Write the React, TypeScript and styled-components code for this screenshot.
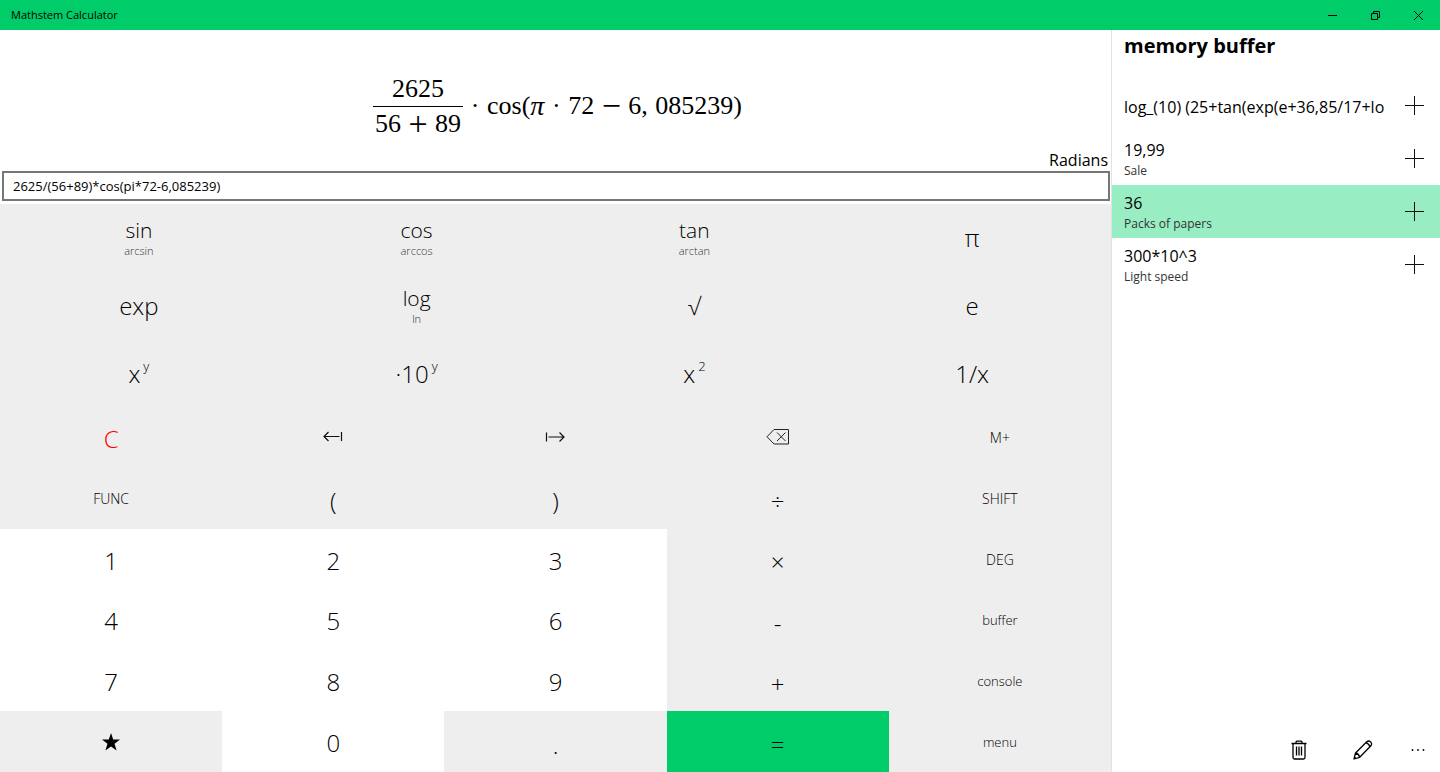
import React from "react";
import styled, { createGlobalStyle, css } from "styled-components";

const ACCENT = "#00cd69";
const KEY_GREY = "#eeeeee";
const UI_FONT = `"Open Sans", "Noto Sans", sans-serif`;
const MATH_FONT = `"Liberation Serif", serif`;

const GlobalStyle = createGlobalStyle`
  *, *::before, *::after { box-sizing: border-box; }
  body { margin: 0; background: #fff; color: #000; font-family: ${UI_FONT}; }
  button, input { font-family: inherit; color: inherit; }
  button { border: 0; padding: 0; margin: 0; background: none; cursor: pointer; }
`;

const Window = styled.div`
  display: flex;
  flex-direction: column;
  min-height: 100vh;
`;

const TitleBar = styled.header`
  display: flex;
  align-items: center;
  justify-content: space-between;
  height: 30px;
  padding-left: 11px;
  background: ${ACCENT};
`;

const AppTitle = styled.h1`
  margin: 0;
  font-size: 11px;
  line-height: 16px;
  font-weight: 400;
`;

const WindowControls = styled.div`
  display: flex;
  align-self: stretch;
`;

const WindowButton = styled.button`
  display: grid;
  place-items: center;
  width: 43px;
`;

const Content = styled.div`
  flex: 1;
  display: flex;
`;

const Calculator = styled.main`
  flex: 1;
  min-width: 0;
  display: flex;
  flex-direction: column;
`;

const FormulaArea = styled.section`
  display: flex;
  justify-content: center;
  align-items: center;
  height: 120px;
  padding: 32px 0 0 4px;
`;

const Formula = styled.div`
  display: flex;
  align-items: center;
  font-family: ${MATH_FONT};
  font-size: 26px;
  line-height: 34px;
  white-space: nowrap;
`;

const Fraction = styled.span`
  display: flex;
  flex-direction: column;
  align-items: center;
`;

const Numerator = styled.span`
  align-self: stretch;
  padding: 0 2px;
  border-bottom: 1px solid #000;
  text-align: center;
`;

const Denominator = styled.span`
  display: flex;
  padding: 0 2px;
`;

const Operator = styled.span<{ $wide?: boolean }>`
  display: inline-block;
  width: ${(p) => (p.$wide ? 34 : 24)}px;
  text-align: center;
  font-size: ${(p) => (p.$wide ? 34 : 26)}px;
`;

const Decimals = styled.span`
  margin-left: 1px;
`;

const Pi = styled.i`
  font-size: 28px;
`;

const AngleMode = styled.div`
  padding: 0 3px;
  font-size: 16px;
  line-height: 21px;
  text-align: right;
`;

const ExpressionInput = styled.input`
  height: 30px;
  margin: 0 1px 3px 2px;
  padding: 0 9px;
  border: 2px solid #767676;
  border-radius: 0;
  outline: none;
  background: #fff;
  font-size: 13px;
`;

const FunctionPad = styled.div`
  flex: 203 1 0;
  display: grid;
  grid-template-columns: repeat(4, 1fr);
  grid-auto-rows: 1fr;
  background: ${KEY_GREY};
`;

const NumberPad = styled.div`
  flex: 365 1 0;
  display: grid;
  grid-template-columns: repeat(5, 1fr);
  grid-auto-rows: 1fr;
`;

type Tone = "grey" | "white" | "accent";

const toneColor: Record<Tone, string> = {
  grey: KEY_GREY,
  white: "#ffffff",
  accent: ACCENT,
};

const keyBase = css`
  display: flex;
  align-items: center;
  justify-content: center;
  min-height: 48px;
  font-weight: 300;
`;

const FunctionKey = styled.button`
  ${keyBase}
  flex-direction: column;
  padding-top: 1px;
  font-size: 24px;
  line-height: 32px;
`;

const PairLabel = styled.span`
  font-size: 21px;
  line-height: 26px;
`;

const AltLabel = styled.small`
  font-size: 11px;
  line-height: 16px;
  color: #333;
`;

const PowerLabel = styled.span`
  display: flex;
  align-items: center;
`;

const Exponent = styled.sup`
  align-self: flex-start;
  margin-left: 3px;
  font-size: 13px;
  line-height: 16px;
`;

type Size = "word" | "caps" | "digit" | "sign";

const keySize = {
  word: css`
    font-size: 13px;
  `,
  caps: css`
    font-size: 14px;
  `,
  digit: css`
    padding-top: 2px;
    font-size: 24px;
  `,
  sign: css`
    padding-top: 5px;
    font-size: 24px;
  `,
};

const NumberKey = styled.button<{ $tone: Tone; $size: Size; $danger?: boolean }>`
  ${keyBase}
  background: ${(p) => toneColor[p.$tone]};
  color: ${(p) => (p.$danger ? "#ff0000" : "#000")};
  ${(p) => keySize[p.$size]}
`;

const Sidebar = styled.aside`
  display: flex;
  flex-direction: column;
  flex: 0 0 329px;
  min-width: 0;
  border-left: 1px solid #e2e2e2;
`;

const SidebarTitle = styled.h2`
  margin: 0 12px 17px;
  font-size: 20px;
  line-height: 32px;
  font-weight: 700;
`;

const MemoryList = styled.ul`
  flex: 1;
  margin: 0;
  padding: 0;
  list-style: none;
`;

const MemoryItem = styled.li<{ $selected?: boolean }>`
  display: flex;
  align-items: center;
  height: 53px;
  padding-left: 12px;
  background: ${(p) => (p.$selected ? "#99edc3" : "transparent")};
`;

const MemoryText = styled.div`
  flex: 1;
  min-width: 0;
  display: flex;
  flex-direction: column;
  padding-top: 3px;
`;

const MemoryValue = styled.span`
  overflow: hidden;
  font-size: 16px;
  line-height: 22px;
  white-space: nowrap;
`;

const MemoryNote = styled.span`
  font-size: 12px;
  line-height: 20px;
  color: #333;
`;

const AddButton = styled.button`
  display: grid;
  place-items: center;
  flex: 0 0 52px;
  align-self: stretch;
`;

const CommandBar = styled.footer`
  display: flex;
  justify-content: flex-end;
  height: 44px;
`;

const CommandButton = styled.button<{ $narrow?: boolean }>`
  display: grid;
  place-items: center;
  width: ${(p) => (p.$narrow ? 45 : 64)}px;
`;

const MinimizeIcon = () => (
  <svg width="11" height="11" viewBox="0 0 11 11" stroke="#000" fill="none">
    <path d="M1 5.5h9" />
  </svg>
);

const RestoreIcon = () => (
  <svg width="11" height="11" viewBox="0 0 11 11" stroke="#000" fill="none">
    <path d="M1.5 3.5h6v6h-6zM3.5 3v-1.5h6v6H8" />
  </svg>
);

const CloseIcon = () => (
  <svg width="11" height="11" viewBox="0 0 11 11" stroke="#000" fill="none">
    <path d="M1 1l9 9M10 1l-9 9" />
  </svg>
);

const CaretLeftIcon = () => (
  <svg width="20" height="12" viewBox="0 0 20 12" stroke="#111" fill="none" strokeWidth="1.2">
    <path d="M1 5.500h15.500M5.500 1L1 5.500l4.500 4.500M18.500 1v9" />
  </svg>
);

const CaretRightIcon = () => (
  <svg width="20" height="12" viewBox="0 0 20 12" stroke="#111" fill="none" strokeWidth="1.2">
    <path d="M19 6H3.500M14.500 1.500L19 6l-4.500 4.500M1.500 1.500v9" />
  </svg>
);

const BackspaceIcon = () => (
  <svg width="24" height="16" viewBox="0 0 24 16" stroke="#222" fill="none">
    <path d="M8 .5h14.500v14.500H8L1 7.750zM11 3.500l8.500 8.500M19.500 3.500L11 12" />
  </svg>
);

const StarIcon = () => (
  <svg width="18" height="18" viewBox="0 0 18 18">
    <path fill="#000" d="M9 0l2.200 6.600H18l-5.500 4.100 2.100 6.800L9 13.400l-5.600 4.100 2.100-6.800L0 6.600h6.800z" />
  </svg>
);

const PlusIcon = () => (
  <svg width="19" height="19" viewBox="0 0 19 19" stroke="#111" fill="none">
    <path d="M9.500 0v19M0 9.500h19" />
  </svg>
);

const TrashIcon = () => (
  <svg width="16" height="20" viewBox="0 0 16 20" stroke="#000" fill="none" strokeWidth="1.300">
    <path d="M.500 3.500h15M5 3.500V2.200Q5 1.200 6 1.200h4q1 0 1 1v1.300M2 3.500v14q0 1.500 1.500 1.500h9q1.500 0 1.500-1.500v-14M5.500 6.500v9M8 6.500v9M10.500 6.500v9" />
  </svg>
);

const PencilIcon = () => (
  <svg width="20" height="20" viewBox="0 0 20 20" stroke="#000" fill="none" strokeWidth="1.300" strokeLinejoin="round">
    <path d="M1 19l1.500-6L13.800 1.700q2-1.600 3.800.200t.3 3.900L6.700 17.300zM2.500 13q3.300.700 4.200 4.300M12.800 2.700q3.300 1 4.200 4.200M1.200 18.600l1.300-.400-.900-.900z" />
  </svg>
);

const MoreIcon = () => (
  <svg width="14" height="4" viewBox="0 0 14 4" fill="#000">
    <circle cx="1.500" cy="2" r="0.900" />
    <circle cx="7" cy="2" r="0.900" />
    <circle cx="12.500" cy="2" r="0.900" />
  </svg>
);

interface FunctionDef {
  label: string;
  alt?: string;
  exponent?: string;
}

const functionKeys: FunctionDef[] = [
  { label: "sin", alt: "arcsin" },
  { label: "cos", alt: "arccos" },
  { label: "tan", alt: "arctan" },
  { label: "π" },
  { label: "exp" },
  { label: "log", alt: "ln" },
  { label: "√" },
  { label: "e" },
  { label: "x", exponent: "y" },
  { label: "·10", exponent: "y" },
  { label: "x", exponent: "2" },
  { label: "1/x" },
];

interface KeyDef {
  label: React.ReactNode;
  name?: string;
  tone?: Tone;
  size: Size;
  danger?: boolean;
}

const digit = (label: string): KeyDef => ({ label, tone: "white", size: "digit" });
const sign = (label: string, tone?: Tone): KeyDef => ({ label, tone, size: "sign" });
const word = (label: string): KeyDef => ({ label, size: "word" });
const caps = (label: string): KeyDef => ({ label, size: "caps" });
const icon = (label: React.ReactNode, name: string): KeyDef => ({ label, name, size: "word" });

const numberKeys: KeyDef[] = [
  { label: "C", size: "digit", danger: true },
  icon(<CaretLeftIcon />, "Move left"),
  icon(<CaretRightIcon />, "Move right"),
  icon(<BackspaceIcon />, "Backspace"),
  caps("M+"),
  caps("FUNC"), sign("("), sign(")"), sign("÷"), caps("SHIFT"),
  digit("1"), digit("2"), digit("3"), sign("×"), caps("DEG"),
  digit("4"), digit("5"), digit("6"), sign("-"), word("buffer"),
  digit("7"), digit("8"), digit("9"), sign("+"), word("console"),
  icon(<StarIcon />, "Favourites"),
  digit("0"), sign("."), sign("=", "accent"), word("menu"),
];

const memory = [
  { value: "log_(10) (25+tan(exp(e+36,85/17+lo" },
  { value: "19,99", note: "Sale" },
  { value: "36", note: "Packs of papers", selected: true },
  { value: "300*10^3", note: "Light speed" },
];

function FunctionLabel({ label, alt, exponent }: FunctionDef) {
  if (alt) {
    return (
      <>
        <PairLabel>{label}</PairLabel>
        <AltLabel>{alt}</AltLabel>
      </>
    );
  }
  if (exponent) {
    return (
      <PowerLabel>
        {label}
        <Exponent>{exponent}</Exponent>
      </PowerLabel>
    );
  }
  return <>{label}</>;
}

export default function App() {
  const [expression, setExpression] = React.useState("2625/(56+89)*cos(pi*72-6,085239)");

  return (
    <Window>
      <GlobalStyle />
      <TitleBar>
        <AppTitle>Mathstem Calculator</AppTitle>
        <WindowControls>
          <WindowButton aria-label="Minimize"><MinimizeIcon /></WindowButton>
          <WindowButton aria-label="Restore"><RestoreIcon /></WindowButton>
          <WindowButton aria-label="Close"><CloseIcon /></WindowButton>
        </WindowControls>
      </TitleBar>
      <Content>
        <Calculator>
          <FormulaArea>
            <Formula>
              <Fraction>
                <Numerator>2625</Numerator>
                <Denominator>56<Operator $wide>+</Operator>89</Denominator>
              </Fraction>
              <Operator>·</Operator>
              cos(<Pi>π</Pi>
              <Operator>·</Operator>
              72
              <Operator $wide>−</Operator>
              6,<Decimals>&nbsp;085239)</Decimals>
            </Formula>
          </FormulaArea>
          <AngleMode>Radians</AngleMode>
          <ExpressionInput
            aria-label="Expression"
            value={expression}
            onChange={(e) => setExpression(e.target.value)}
          />
          <FunctionPad>
            {functionKeys.map((k, i) => (
              <FunctionKey key={i}><FunctionLabel {...k} /></FunctionKey>
            ))}
          </FunctionPad>
          <NumberPad>
            {numberKeys.map((k, i) => (
              <NumberKey
                key={i}
                aria-label={k.name}
                $tone={k.tone ?? "grey"}
                $size={k.size}
                $danger={k.danger}
              >
                {k.label}
              </NumberKey>
            ))}
          </NumberPad>
        </Calculator>
        <Sidebar>
          <SidebarTitle>memory buffer</SidebarTitle>
          <MemoryList>
            {memory.map((m) => (
              <MemoryItem key={m.value} $selected={m.selected}>
                <MemoryText>
                  <MemoryValue>{m.value}</MemoryValue>
                  {m.note && <MemoryNote>{m.note}</MemoryNote>}
                </MemoryText>
                <AddButton aria-label={`Insert ${m.value}`}><PlusIcon /></AddButton>
              </MemoryItem>
            ))}
          </MemoryList>
          <CommandBar>
            <CommandButton aria-label="Delete"><TrashIcon /></CommandButton>
            <CommandButton aria-label="Edit"><PencilIcon /></CommandButton>
            <CommandButton aria-label="More" $narrow><MoreIcon /></CommandButton>
          </CommandBar>
        </Sidebar>
      </Content>
    </Window>
  );
}
